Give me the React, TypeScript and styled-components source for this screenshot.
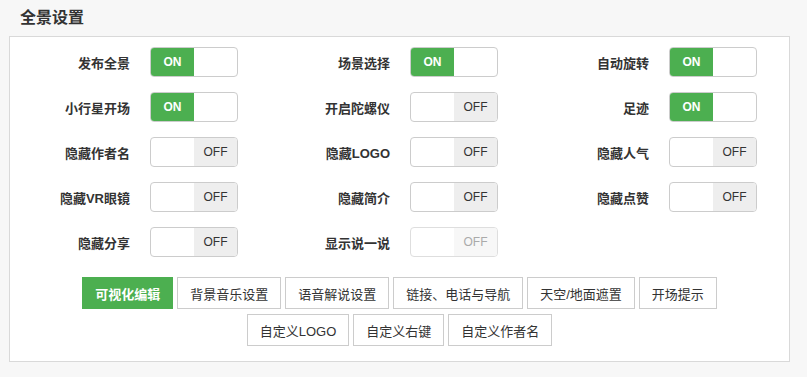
import styled, { createGlobalStyle } from "styled-components";

const GlobalStyle = createGlobalStyle`
  html, body {
    margin: 0;
    padding: 0;
    background: #f7f7f7;
    font-family: "Liberation Sans", "Noto Sans CJK SC", sans-serif;
    color: #333;
  }
`;

const Page = styled.div`
  padding: 0 17px 16px 9px;
`;

const Heading = styled.h2`
  margin: 0;
  height: 36px;
  line-height: 36px;
  padding-left: 11px;
  font-size: 16px;
  font-weight: bold;
  color: #333;
`;

const Panel = styled.div`
  background: #fff;
  border: 1px solid #d9d9d9;
  padding: 10px 0 15px;
`;

const Grid = styled.div`
  display: grid;
  grid-template-columns: 260px 259px 260px;
  row-gap: 15px;
`;

const Field = styled.div`
  display: flex;
  align-items: center;
`;

const Label = styled.span`
  width: 120px;
  padding-right: 20px;
  text-align: right;
  font-size: 13px;
  font-weight: bold;
  color: #333;
  white-space: nowrap;
`;

const Switch = styled.div<{ $disabled?: boolean }>`
  display: flex;
  box-sizing: border-box;
  width: 88px;
  height: 30px;
  border: 1px solid ${(p) => (p.$disabled ? "#dedede" : "#ccc")};
  border-radius: 4px;
  overflow: hidden;
  background: #fff;
`;

const Half = styled.span<{ $on?: boolean; $disabled?: boolean }>`
  flex: 1;
  display: flex;
  align-items: center;
  justify-content: center;
  font-size: 12px;
  font-weight: ${(p) => (p.$on ? "bold" : "normal")};
  color: ${(p) => (p.$on ? "#fff" : p.$disabled ? "#aaa" : "#333")};
  background: ${(p) =>
    p.$on ? "#4caf50" : p.$disabled ? "#f7f7f7" : "#eee"};
`;

const Blank = styled.span`
  flex: 1;
`;

const ButtonRows = styled.div`
  margin-top: 20px;
  display: flex;
  flex-direction: column;
  gap: 5px;
`;

const ButtonRow = styled.div`
  display: flex;
  justify-content: center;
  gap: 4px;
`;

const Tab = styled.button<{ $active?: boolean }>`
  height: 32px;
  padding: 0 12px;
  border: 1px solid ${(p) => (p.$active ? "#4caf50" : "#ccc")};
  background: ${(p) => (p.$active ? "#4caf50" : "#fff")};
  color: ${(p) => (p.$active ? "#fff" : "#333")};
  font-family: inherit;
  font-size: 13px;
  font-weight: ${(p) => (p.$active ? "bold" : "normal")};
  white-space: nowrap;
  cursor: pointer;
`;

type Item = { label: string; on: boolean; disabled?: boolean };

const items: Item[] = [
  { label: "发布全景", on: true },
  { label: "场景选择", on: true },
  { label: "自动旋转", on: true },
  { label: "小行星开场", on: true },
  { label: "开启陀螺仪", on: false },
  { label: "足迹", on: true },
  { label: "隐藏作者名", on: false },
  { label: "隐藏LOGO", on: false },
  { label: "隐藏人气", on: false },
  { label: "隐藏VR眼镜", on: false },
  { label: "隐藏简介", on: false },
  { label: "隐藏点赞", on: false },
  { label: "隐藏分享", on: false },
  { label: "显示说一说", on: false, disabled: true },
];

const rowOne = ["背景音乐设置", "语音解说设置", "链接、电话与导航", "天空/地面遮置", "开场提示"];
const rowTwo = ["自定义LOGO", "自定义右键", "自定义作者名"];

const Toggle = ({ on, disabled }: { on: boolean; disabled?: boolean }) => (
  <Switch $disabled={disabled}>
    {on ? (
      <>
        <Half $on>ON</Half>
        <Blank />
      </>
    ) : (
      <>
        <Blank />
        <Half $disabled={disabled}>OFF</Half>
      </>
    )}
  </Switch>
);

export default function App() {
  return (
    <Page>
      <GlobalStyle />
      <Heading>全景设置</Heading>
      <Panel>
        <Grid>
          {items.map((it) => (
            <Field key={it.label}>
              <Label>{it.label}</Label>
              <Toggle on={it.on} disabled={it.disabled} />
            </Field>
          ))}
        </Grid>
        <ButtonRows>
          <ButtonRow>
            <Tab $active>可视化编辑</Tab>
            {rowOne.map((t) => (
              <Tab key={t}>{t}</Tab>
            ))}
          </ButtonRow>
          <ButtonRow>
            {rowTwo.map((t) => (
              <Tab key={t}>{t}</Tab>
            ))}
          </ButtonRow>
        </ButtonRows>
      </Panel>
    </Page>
  );
}
